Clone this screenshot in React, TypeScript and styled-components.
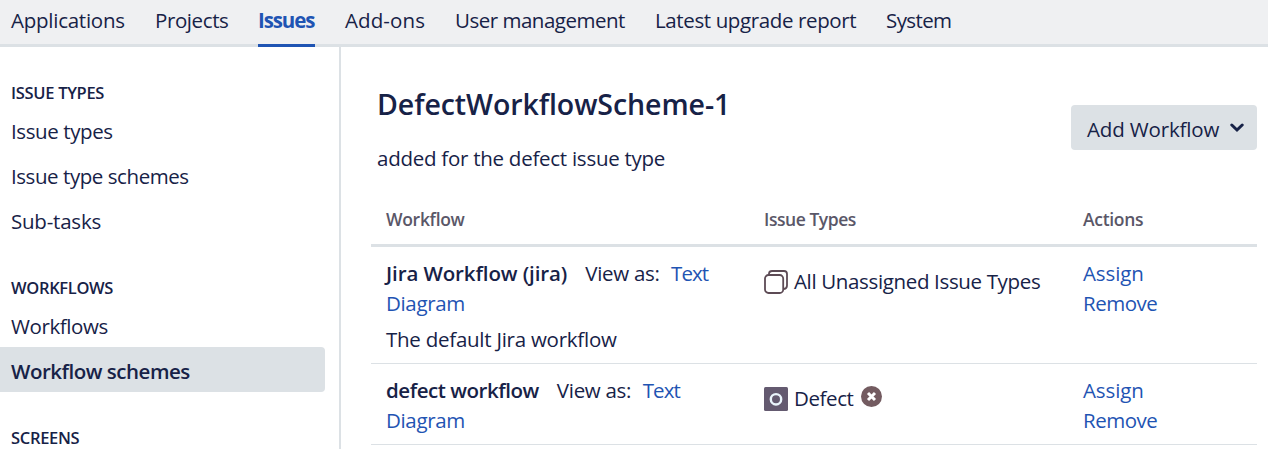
import React from 'react';
import styled, { createGlobalStyle } from 'styled-components';

const ink = '#172247';
const link = '#1f54b3';
const rule = '#dce1e5';

const GlobalStyle = createGlobalStyle`
  * { box-sizing: border-box; }
  body {
    margin: 0;
    background: #fff;
    color: ${ink};
    font-family: 'Open Sans', 'Noto Sans', sans-serif;
    font-size: 20.5px;
    line-height: 30px;
    overflow: hidden;
  }
`;

const Page = styled.div`
  height: 449px;
  display: flex;
  flex-direction: column;
  overflow: hidden;
`;

const Nav = styled.nav`
  flex: none;
  display: flex;
  gap: 30px;
  height: 47px;
  padding-left: 11px;
  background: #eff0f2;
  box-shadow: inset 0 -3px ${rule};
`;

const NavItem = styled.a<{ $active?: boolean; $width: number; $track: number }>`
  width: ${p => p.$width}px;
  height: 47px;
  padding-top: 5px;
  white-space: nowrap;
  letter-spacing: ${p => p.$track}px;
  color: ${p => (p.$active ? link : ink)};
  font-weight: ${p => (p.$active ? 700 : 400)};
  border-bottom: 3px solid ${p => (p.$active ? link : 'transparent')};
`;

const Body = styled.div`
  flex: 1;
  min-height: 0;
  display: flex;
`;

const Sidebar = styled.aside`
  width: 341px;
  flex: none;
  overflow: hidden;
  border-right: 2px solid ${rule};
`;

const GroupTitle = styled.h2<{ $track: number }>`
  margin: 0;
  height: 60px;
  padding: 31px 0 0 11px;
  font-size: 16.5px;
  font-weight: 600;
  letter-spacing: ${p => p.$track}px;
`;

const SideItem = styled.a<{ $active?: boolean; $track: number }>`
  display: block;
  width: 325px;
  height: 45px;
  padding: 9px 0 0 11px;
  border-radius: 0 4px 4px 0;
  background: ${p => (p.$active ? rule : 'transparent')};
  font-weight: ${p => (p.$active ? 600 : 400)};
  letter-spacing: ${p => p.$track}px;
`;

const Main = styled.main`
  flex: 1;
  padding: 38px 11px 0 30px;
`;

const Header = styled.header`
  display: flex;
  justify-content: space-between;
  height: 112px;
  padding-left: 6px;
`;

const Title = styled.h1`
  margin: 0 0 20px;
  font-size: 28.5px;
  line-height: 38px;
  font-weight: 600;
  letter-spacing: -0.07px;
`;

const Description = styled.p`
  margin: 0;
  letter-spacing: -0.26px;
`;

const Button = styled.button`
  display: flex;
  align-items: center;
  gap: 11px;
  width: 186px;
  height: 45px;
  margin-top: 20px;
  padding: 3px 0 0 16px;
  border: 0;
  border-radius: 4px;
  background: ${rule};
  color: ${ink};
  font: inherit;
  letter-spacing: -0.15px;
  white-space: nowrap;
`;

const Chevron = styled.svg`
  flex: none;
  margin-top: -2px;
`;

const Row = styled.div`
  display: grid;
  grid-template-columns: 378px 319px 1fr;
  padding: 11px 0 9px 15px;
  border-bottom: 1px solid ${rule};
`;

const HeadRow = styled(Row)`
  height: 50px;
  padding: 7px 0 0 15px;
  border-bottom-width: 3px;
  color: #5a5768;
  font-size: 17.5px;
  font-weight: 600;
`;

const Line = styled.div<{ $track?: number }>`
  white-space: nowrap;
  letter-spacing: ${p => p.$track ?? -0.3}px;
`;

const Note = styled(Line)`
  margin-top: 6px;
`;

const Name = styled.strong<{ $track: number }>`
  font-weight: 600;
  margin-right: 18px;
  letter-spacing: ${p => p.$track}px;
`;

const Link = styled.a<{ $track: number }>`
  color: ${link};
  letter-spacing: ${p => p.$track}px;
`;

const TextLink = styled(Link)`
  margin-left: 11.5px;
`;

const TypeLine = styled.div`
  display: flex;
  align-items: center;
  height: 30px;
  margin-top: 9px;
  white-space: nowrap;
`;

const TypeName = styled.span<{ $track: number }>`
  margin: 0 7px 2px 6px;
  letter-spacing: ${p => p.$track}px;
`;

const AllTypesIcon = () => (
  <svg width="24" height="24" viewBox="0 0 24 24" fill="none" stroke="#5d4b55" strokeWidth="1.8">
    <path d="M5 5V3.5Q5.3 1 8 1H20Q23 1 23 4V15.5Q23 18.5 20 19" />
    <rect x="1" y="5" width="18.2" height="18" rx="3.5" />
  </svg>
);

const DefectIcon = () => (
  <svg width="24" height="24" viewBox="0 0 24 24">
    <rect width="24" height="24" rx="1.5" fill="#645a70" />
    <circle cx="12" cy="12.3" r="5.2" fill="none" stroke="#eaf5fc" strokeWidth="2.4" />
  </svg>
);

const RemoveIcon = styled.svg`
  margin-top: -6px;
`;

const nav = [
  { label: 'Applications', width: 114, track: -0.25 },
  { label: 'Projects', width: 73, track: -0.4 },
  { label: 'Issues', width: 57, track: -1.1, active: true },
  { label: 'Add-ons', width: 80, track: 0.1 },
  { label: 'User management', width: 170, track: -0.49 },
  { label: 'Latest upgrade report', width: 201, track: -0.38 },
  { label: 'System', width: 65, track: -0.6 },
];

const groups = [
  {
    title: 'ISSUE TYPES',
    track: -0.3,
    items: [
      { label: 'Issue types', track: -0.4 },
      { label: 'Issue type schemes', track: -0.44 },
      { label: 'Sub-tasks', track: -0.22 },
    ],
  },
  {
    title: 'WORKFLOWS',
    track: -0.33,
    items: [
      { label: 'Workflows', track: -0.4 },
      { label: 'Workflow schemes', track: -0.48, active: true },
    ],
  },
  { title: 'SCREENS', track: -0.3, items: [] },
];

const Actions = () => (
  <div>
    <Line><Link $track={-0.1}>Assign</Link></Line>
    <Line><Link $track={-0.5}>Remove</Link></Line>
  </div>
);

export default function App() {
  return (
    <Page>
      <GlobalStyle />
      <Nav>
        {nav.map(n => (
          <NavItem key={n.label} $active={n.active} $width={n.width} $track={n.track}>{n.label}</NavItem>
        ))}
      </Nav>
      <Body>
        <Sidebar>
          {groups.map(g => (
            <section key={g.title}>
              <GroupTitle $track={g.track}>{g.title}</GroupTitle>
              {g.items.map(i => (
                <SideItem key={i.label} $active={'active' in i} $track={i.track}>{i.label}</SideItem>
              ))}
            </section>
          ))}
        </Sidebar>
        <Main>
          <Header>
            <div>
              <Title>DefectWorkflowScheme-1</Title>
              <Description>added for the defect issue type</Description>
            </div>
            <Button>
              Add Workflow
              <Chevron width="14" height="10" viewBox="0 0 14 10" fill="none" stroke={ink} strokeWidth="3">
                <path d="M1.8 2L7 7L12.2 2" strokeLinecap="round" />
              </Chevron>
            </Button>
          </Header>
          <HeadRow>
            <Line>Workflow</Line>
            <Line $track={-0.45}>Issue Types</Line>
            <Line>Actions</Line>
          </HeadRow>
          <Row>
            <div>
              <Line><Name $track={-0.1}>Jira Workflow (jira)</Name>View as:<TextLink $track={-0.9}>Text</TextLink></Line>
              <Line><Link $track={-0.35}>Diagram</Link></Line>
              <Note $track={-0.25}>The default Jira workflow</Note>
            </div>
            <TypeLine>
              <AllTypesIcon />
              <TypeName $track={-0.35}>All Unassigned Issue Types</TypeName>
            </TypeLine>
            <Actions />
          </Row>
          <Row>
            <div>
              <Line><Name $track={-0.45}>defect workflow</Name>View as:<TextLink $track={-0.9}>Text</TextLink></Line>
              <Line><Link $track={-0.35}>Diagram</Link></Line>
            </div>
            <TypeLine>
              <DefectIcon />
              <TypeName $track={-0.4}>Defect</TypeName>
              <RemoveIcon width="21" height="21" viewBox="0 0 21 21">
                <circle cx="10.5" cy="10.5" r="10.5" fill="#735b60" />
                <path d="M7 7L14 14M14 7L7 14" stroke="#fff" strokeWidth="3" />
              </RemoveIcon>
            </TypeLine>
            <Actions />
          </Row>
        </Main>
      </Body>
    </Page>
  );
}
